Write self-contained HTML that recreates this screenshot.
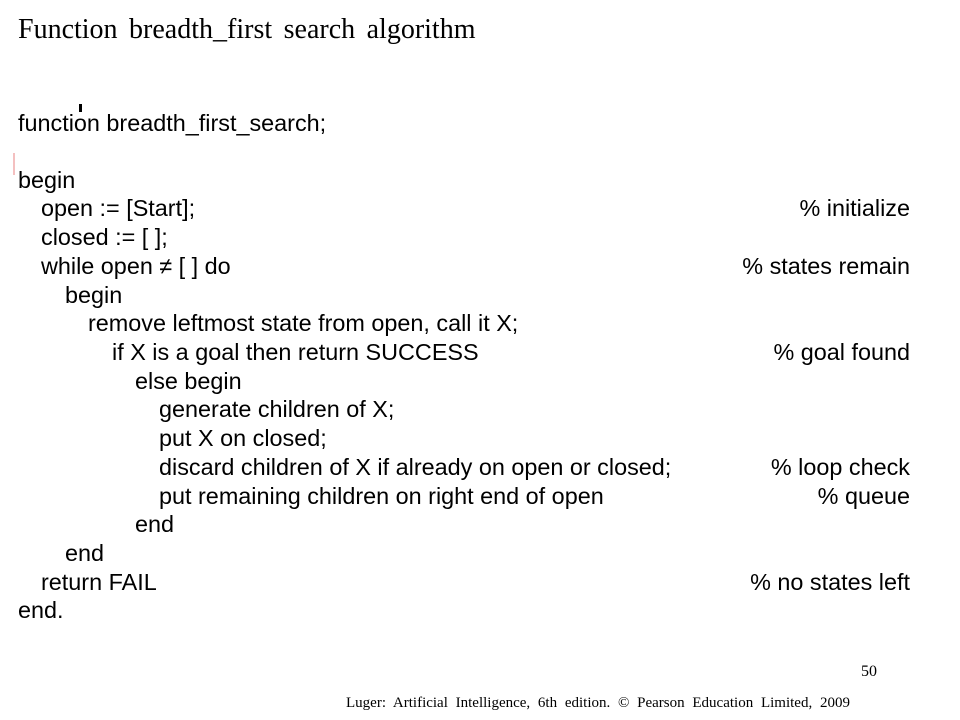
<!DOCTYPE html>
<html><head><meta charset="utf-8"><style>
body{margin:0;width:960px;height:720px;background:#fff;position:relative;overflow:hidden}
.t{position:absolute;left:18px;top:14px;font-family:"Liberation Serif",serif;font-size:28px;word-spacing:4.5px;white-space:nowrap;color:#000}
.l{position:absolute;font-family:"Liberation Sans",sans-serif;font-size:23.4px;line-height:26px;white-space:nowrap;color:#000}
.c{position:absolute;right:50px;font-family:"Liberation Sans",sans-serif;font-size:23.4px;line-height:26px;white-space:nowrap;color:#000}
.f{position:absolute;font-family:"Liberation Serif",serif;font-size:15px;white-space:nowrap;color:#000}
</style></head><body>
<div class="t">Function breadth_first search algorithm</div>
<div style="position:absolute;left:79px;top:104px;width:3px;height:8px;background:#000"></div>
<div style="position:absolute;left:13px;top:153px;width:2px;height:22px;background:#f4c0c0"></div>
<div class="l" style="left:18px;top:110px">function breadth_first_search;</div>
<div class="l" style="left:18px;top:167px">begin</div>
<div class="l" style="left:41px;top:195px">open := [Start];</div><div class="c" style="top:195px">% initialize</div>
<div class="l" style="left:41px;top:224px">closed := [ ];</div>
<div class="l" style="left:41px;top:253px">while open ≠ [ ] do</div><div class="c" style="top:253px">% states remain</div>
<div class="l" style="left:65px;top:282px">begin</div>
<div class="l" style="left:88px;top:310px">remove leftmost state from open, call it X;</div>
<div class="l" style="left:112px;top:339px">if X is a goal then return SUCCESS</div><div class="c" style="top:339px">% goal found</div>
<div class="l" style="left:135px;top:368px">else begin</div>
<div class="l" style="left:159px;top:396px">generate children of X;</div>
<div class="l" style="left:159px;top:425px">put X on closed;</div>
<div class="l" style="left:159px;top:454px">discard children of X if already on open or closed;</div><div class="c" style="top:454px">% loop check</div>
<div class="l" style="left:159px;top:483px">put remaining children on right end of open</div><div class="c" style="top:483px">% queue</div>
<div class="l" style="left:135px;top:511px">end</div>
<div class="l" style="left:65px;top:540px">end</div>
<div class="l" style="left:41px;top:569px">return FAIL</div><div class="c" style="top:569px">% no states left</div>
<div class="l" style="left:18px;top:597px">end.</div>
<div class="f" style="left:861px;top:663px;font-size:16px">50</div>
<div class="f" style="left:346px;top:695px;word-spacing:4px">Luger: Artificial Intelligence, 6th edition. © Pearson Education Limited, 2009</div>
</body></html>
